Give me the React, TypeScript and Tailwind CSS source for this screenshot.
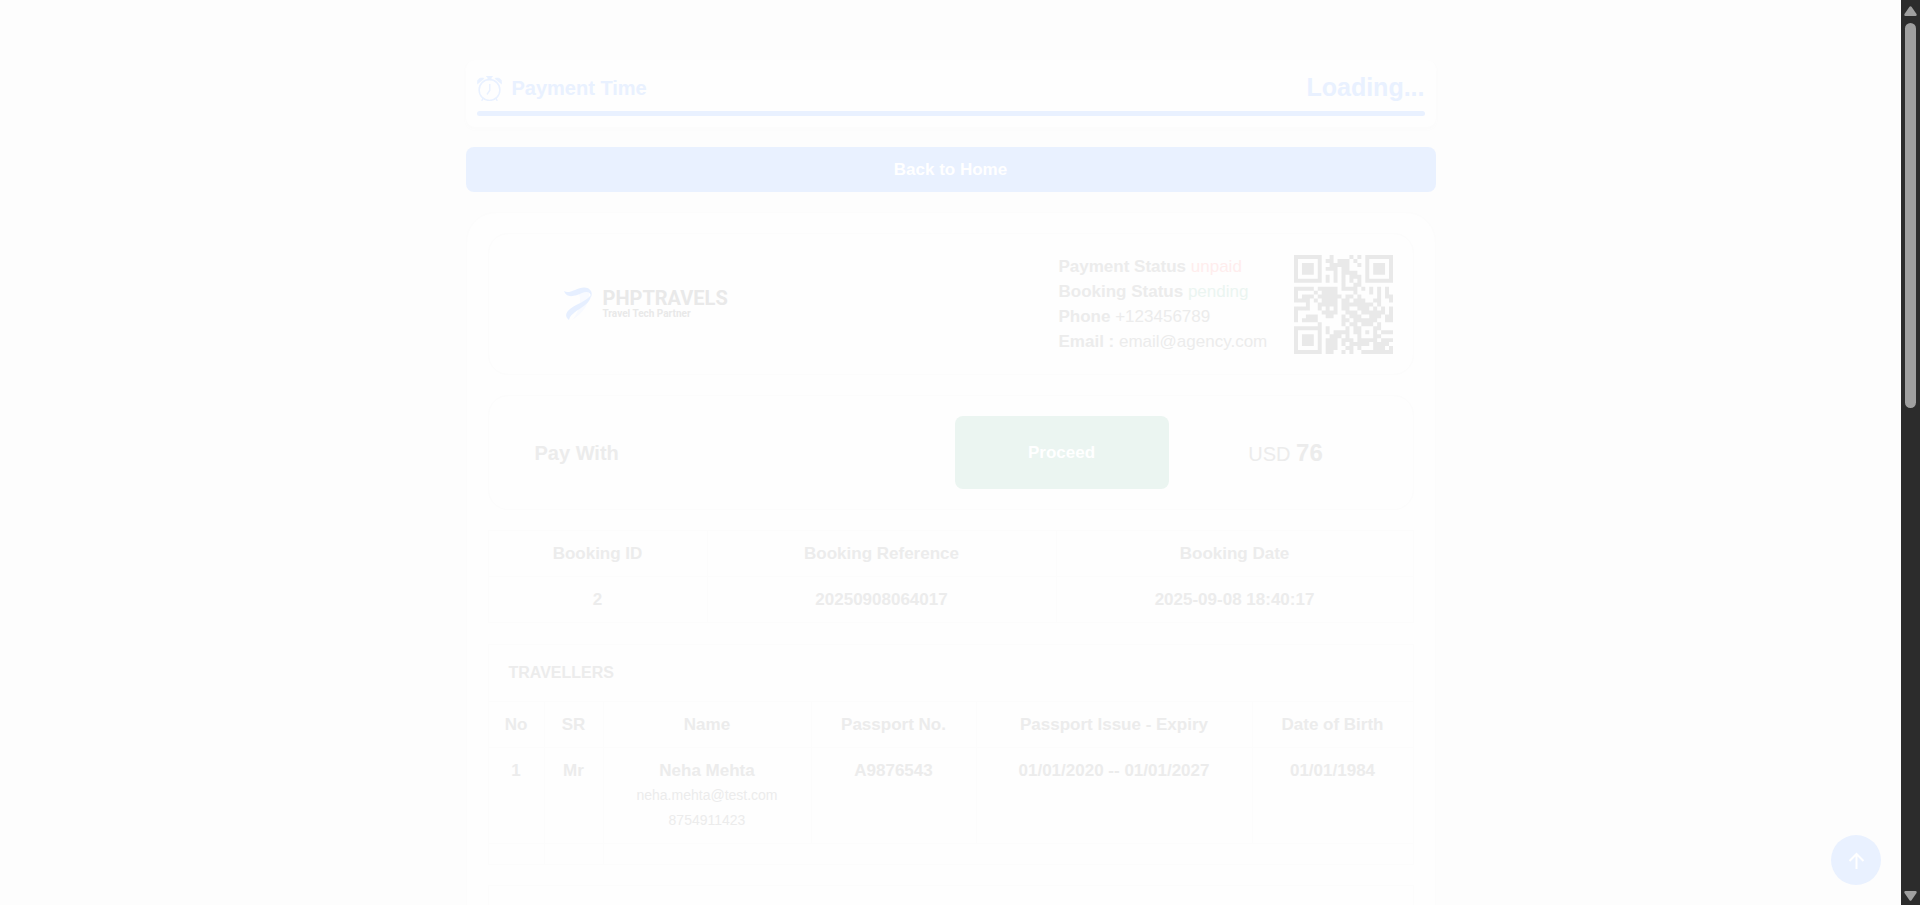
import React from "react";

const qrRows = [
  "#######..#....#.#.#######",
  "#.....#.##.###.#..#.....#",
  "#.###.#..#####..#.#.###.#",
  "#.###.#.###.##....#.###.#",
  "#.###.#...#.####..#.###.#",
  "#.....#.#.#.#.###.#.....#",
  "#######.#.#.#.#.#.#######",
  "............#..##........",
  "#####.#####.####.#.#.#.#.",
  "#....#.####....#...#.#.#.",
  "#.###.######.##.#....#.##",
  "####.#.####.##.###..##..#",
  "...#..#####.########.#...",
  "####..#.#.#.##..###.#.#.#",
  "#......####..###.######.#",
  "#..###..##..#.###..###.##",
  "#.####......##.######..##",
  "......#.....#.##.###.#...",
  "#######.#....#.##...##...",
  "#.....#.#.####.##.#.#.###",
  "#.###.#..###.#..#...##...",
  "#.###.#.###.###.#####.###",
  "#.###.#.###.#.#####.####.",
  "#.....#.###..##.#...###.#",
  "#######.##..#.#..########",
];

function AlarmIcon() {
  return (
    <svg width="25" height="25" viewBox="0 0 25 25" fill="none" stroke="currentColor" aria-hidden="true">
      <circle cx="12.5" cy="14" r="10.4" strokeWidth="1.5" />
      <path d="M12.8 8v6.2L10 18.5" strokeWidth="1.4" />
      <path d="M.4 8C-.6 4 2.500 .8 7 2.400L5.500 4Z M24.600 8C25.600 4 22.500 .8 18 2.400L19.500 4Z M9.300 0h6.400l-1.500 2v2h-3.400V2Z" fill="currentColor" stroke="currentColor" strokeWidth=".6" />
      <path d="M6 22 4.800 25M19 22 20.200 25M10 24.600h5" strokeWidth="1.3" />
    </svg>
  );
}

function Logo() {
  return (
    <div className="flex items-center gap-2.5 font-[Roboto,sans-serif] text-[#e9e9e9]">
      <svg width="29" height="34" viewBox="0 0 29 34" fill="none" aria-hidden="true">
        <path d="M15 6c5-2 9-2 10 0 1 9-5 20-17 27 7-8 10-17 7-27Z" fill="#f8faff" />
        <path d="M0 4c3 2 6 1 11-1 6-3 13-4 16 1 1 2 1 4 0 6 0-5-4-6-9-4C11 9 3 12 0 4Z" fill="#e6efff" />
        <path d="M27 8c0 5-4 9-10 13-6 4-11 7-12 12-4-3-4-7 1-11 6-5 17-8 21-14Z" fill="#e6efff" />
      </svg>
      <div className="font-bold">
        <div className="text-[20px] leading-5">PHPTRAVELS</div>
        <div className="text-[10px] leading-3">Travel Tech Partner</div>
      </div>
    </div>
  );
}

function QrCode() {
  const d = qrRows
    .map((row, y) => row.split("").map((c, x) => (c === "#" ? `M${x} ${y}h1v1h-1z` : "")).join(""))
    .join("");
  return (
    <svg className="size-[99px] shrink-0" viewBox="0 0 25 25" role="img" aria-label="Booking QR code">
      <path d={d} fill="#e9e9e9" />
    </svg>
  );
}

const cell = "border border-[#fcfcfc] p-2.5 align-top font-bold leading-[25px]";

export default function App() {
  return (
    <div className="flex h-screen bg-[#fdfdfd] font-['Liberation_Sans',Arial,sans-serif] text-[17px] text-[#ececec]">
      <div className="relative min-w-0 flex-1 overflow-hidden">
        <main className="mx-auto max-w-[970px] pt-[60px]">
          <section className="rounded-lg border border-[#fefefe] bg-[#fefefe] p-2.5 text-[#e9f1ff] shadow-[0_2px_4px_#fbfbfb]">
            <div className="flex h-[34px] items-center justify-between">
              <h1 className="flex items-center gap-2.5 text-xl font-bold">
                <AlarmIcon />
                Payment Time
              </h1>
              <span className="text-[25px] font-bold">Loading...</span>
            </div>
            <div className="mt-1.5 h-[5px] rounded-full bg-[#e9f1ff]" />
          </section>

          <a href="#home" className="mt-5 flex h-[45px] items-center justify-center rounded-lg bg-[#e9f1ff] font-bold text-white">
            Back to Home
          </a>

          <section className="mt-5 rounded-[30px] border border-[#fcfcfc] bg-[#fefefe] px-[21px] py-5">
            <div className="flex items-center justify-between rounded-[20px] border border-[#fcfcfc] py-5 pr-5 pl-[75px]">
              <Logo />
              <div className="flex items-center gap-5">
                <div className="w-[215px] leading-[25px] whitespace-nowrap">
                  <p><strong>Payment Status</strong> <span className="text-[#ffeded]">unpaid</span></p>
                  <p><strong>Booking Status</strong> <span className="text-[#ebf5f1]">pending</span></p>
                  <p><strong>Phone</strong> +123456789</p>
                  <p><strong>Email :</strong> email@agency.com</p>
                </div>
                <QrCode />
              </div>
            </div>

            <div className="mt-5 flex items-center rounded-[20px] border border-[#fcfcfc] py-5 pr-2.5 pl-[46px]">
              <h2 className="flex-1 text-xl font-bold">Pay With</h2>
              <button type="button" className="h-[73px] w-[214px] rounded-lg bg-[#ebf5f1] font-bold text-white">
                Proceed
              </button>
              <p className="w-[234px] text-center text-xl">
                USD <strong className="text-2xl">76</strong>
              </p>
            </div>

            <table className="mt-5 w-full table-fixed border-collapse text-center">
              <colgroup>
                <col className="w-[219px]" />
                <col className="w-[349px]" />
                <col />
              </colgroup>
              <thead>
                <tr>
                  <th className={cell}>Booking ID</th>
                  <th className={cell}>Booking Reference</th>
                  <th className={cell}>Booking Date</th>
                </tr>
              </thead>
              <tbody>
                <tr>
                  <td className={cell}>2</td>
                  <td className={cell}>20250908064017</td>
                  <td className={cell}>2025-09-08 18:40:17</td>
                </tr>
              </tbody>
            </table>

            <table className="mt-[21px] w-full table-fixed border-collapse text-center">
              <colgroup>
                <col className="w-[56px]" />
                <col className="w-[59px]" />
                <col className="w-[208px]" />
                <col className="w-[165px]" />
                <col className="w-[276px]" />
                <col />
              </colgroup>
              <thead>
                <tr>
                  <th colSpan={6} className="h-[57px] border border-[#fcfcfc] px-5 text-left text-base">TRAVELLERS</th>
                </tr>
                <tr>
                  <th className={cell}>No</th>
                  <th className={cell}>SR</th>
                  <th className={cell}>Name</th>
                  <th className={cell}>Passport No.</th>
                  <th className={cell}>Passport Issue - Expiry</th>
                  <th className={cell}>Date of Birth</th>
                </tr>
              </thead>
              <tbody>
                <tr>
                  <td className={cell}>1</td>
                  <td className={cell}>Mr</td>
                  <td className={cell}>
                    Neha Mehta
                    <div className="text-sm leading-[25px] font-normal">neha.mehta@test.com</div>
                    <div className="text-sm leading-[25px] font-normal">8754911423</div>
                  </td>
                  <td className={cell}>A9876543</td>
                  <td className={cell}>01/01/2020 -- 01/01/2027</td>
                  <td className={cell}>01/01/1984</td>
                </tr>
                <tr className="h-[21px]">
                  <td className="border border-[#fcfcfc]" />
                  <td className="border border-[#fcfcfc]" />
                  <td colSpan={4} className="border border-[#fcfcfc]" />
                </tr>
              </tbody>
            </table>

            <div className="mt-5 h-[200px] border border-[#fcfcfc]" />
          </section>
        </main>

        <button
          type="button"
          aria-label="Back to top"
          className="absolute right-5 bottom-5 flex size-[50px] items-center justify-center rounded-full bg-[#e9f1ff] text-white"
        >
          <svg width="17" height="17" viewBox="0 0 17 17" fill="none" stroke="currentColor" strokeWidth="2" aria-hidden="true">
            <path d="M8.500 17V2M1.500 9l7-7 7 7" />
          </svg>
        </button>
      </div>

      <div className="flex w-[19px] shrink-0 flex-col items-center bg-[#2c2c2c] pt-1.5 pb-1" aria-hidden="true">
        <svg width="13" height="10" viewBox="0 0 13 10" fill="#9f9f9f">
          <path d="M5.500.8q1-1.200 2 0l5 7.200q.7 1.800-1 2h-10q-1.700-.2-1-2Z" />
        </svg>
        <div className="mt-[7px] h-[43%] w-[11px] rounded-full bg-[#9f9f9f]" />
        <svg className="mt-auto" width="13" height="10" viewBox="0 0 13 10" fill="#9f9f9f">
          <path d="M5.500 9.200q1 1.200 2 0l5-7.200q.7-1.800-1-2h-10q-1.700.2-1 2Z" />
        </svg>
      </div>
    </div>
  );
}
